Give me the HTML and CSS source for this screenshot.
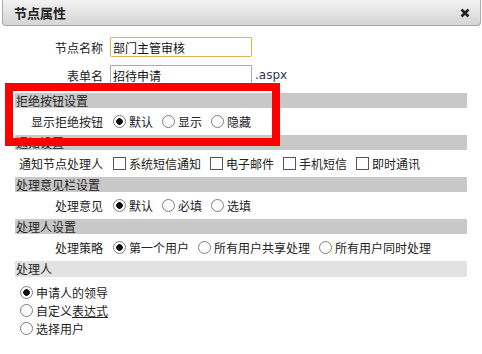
FILE: index.html
```html
<!DOCTYPE html>
<html lang="zh-CN">

<head>
  <meta charset="UTF-8">
  <meta name="viewport" content="width=device-width, initial-scale=1.0">
  <title>节点属性</title>
  <link rel="stylesheet" href="styles.css">
</head>

<body>
  <div class="dialog-title">
    <span>节点属性</span>
    <svg class="close" width="10" height="10" viewBox="0 0 10 10">
      <path d="M1.5 1.5 L8.5 8.5 M8.5 1.5 L1.5 8.5" stroke="#222" stroke-width="2.6" />
    </svg>
  </div>

  <div class="dialog-body">
    <div class="field">
      <span class="field-label">节点名称</span>
      <input type="text" class="text-input focused" value="部门主管审核">
    </div>
    <div class="field">
      <span class="field-label">表单名</span>
      <input type="text" class="text-input" value="招待申请"><span class="suffix">.aspx</span>
    </div>

    <div class="section-title">拒绝按钮设置</div>
    <div class="section-row">
      <span class="field-label">显示拒绝按钮</span>
      <label class="option"><input type="radio" name="reject" checked>默认</label>
      <label class="option"><input type="radio" name="reject">显示</label>
      <label class="option"><input type="radio" name="reject">隐藏</label>
    </div>

    <div class="section-title">通知设置</div>
    <div class="section-row">
      <span class="field-label">通知节点处理人</span>
      <label class="option"><input type="checkbox">系统短信通知</label>
      <label class="option"><input type="checkbox">电子邮件</label>
      <label class="option"><input type="checkbox">手机短信</label>
      <label class="option"><input type="checkbox">即时通讯</label>
    </div>

    <div class="section-title">处理意见栏设置</div>
    <div class="section-row">
      <span class="field-label">处理意见</span>
      <label class="option"><input type="radio" name="opinion" checked>默认</label>
      <label class="option"><input type="radio" name="opinion">必填</label>
      <label class="option"><input type="radio" name="opinion">选填</label>
    </div>

    <div class="section-title">处理人设置</div>
    <div class="section-row">
      <span class="field-label">处理策略</span>
      <label class="option"><input type="radio" name="strategy" checked>第一个用户</label>
      <label class="option"><input type="radio" name="strategy">所有用户共享处理</label>
      <label class="option"><input type="radio" name="strategy">所有用户同时处理</label>
    </div>

    <div class="section-title light">处理人</div>
    <div class="handler-list">
      <label class="option"><input type="radio" name="handler" checked>申请人的领导</label>
      <label class="option"><input type="radio" name="handler">自定义<a href="#" class="link">表达式</a></label>
      <label class="option"><input type="radio" name="handler">选择用户</label>
    </div>
  </div>

  <div class="highlight"></div>
</body>

</html>
```

FILE: styles.css
```css
body {
  margin: 0;
  padding: 0;
  font-family: "Noto Sans CJK SC", "Noto Sans", sans-serif;
  font-size: 12px;
  color: #222;
  background: #fff;
  position: relative;
}

.dialog-title {
  height: 25px;
  margin: 0 1px 0 2px;
  padding: 0 10px 0 11px;
  border: 1px solid #a8a8a8;
  border-top: none;
  border-radius: 0 0 4px 4px;
  background: linear-gradient(#f3f3f3, #d5d5d5);
  display: flex;
  align-items: center;
  justify-content: space-between;
  font-size: 13px;
  font-weight: bold;
  color: #222;
}

.dialog-body {
  width: 452px;
  padding: 11px 0 0 15px;
}

.field {
  display: flex;
  align-items: center;
  height: 20px;
  margin-bottom: 8px;
}

.field-label {
  width: 88px;
  padding-right: 5px;
  text-align: right;
  flex-shrink: 0;
}

.text-input {
  box-sizing: border-box;
  width: 142px;
  height: 20px;
  margin: 0 0 0 2px;
  padding: 0 2px;
  border: 1px solid #ababab;
  font-family: inherit;
  font-size: 12px;
  color: #111;
  outline: none;
}

.text-input.focused {
  border-color: #e0b45c;
  border-radius: 2px;
  box-shadow: 0 0 1px #f0d090;
}

.suffix {
  margin-left: 3px;
  font-family: "DejaVu Sans", sans-serif;
  font-size: 12px;
  color: #2e3a52;
}

.section-title {
  height: 15px;
  line-height: 15px;
  padding-left: 1px;
  background: #c8c8c8;
}

.section-title.light {
  height: 16px;
  line-height: 16px;
  background: #e2e2e2;
}

.section-row {
  display: flex;
  align-items: center;
  gap: 4px;
  height: 27px;
}

.section-row .field-label {
  margin-right: -4px;
}

.option {
  display: inline-flex;
  align-items: center;
}

.option input {
  appearance: none;
  box-sizing: border-box;
  width: 13px;
  height: 13px;
  margin: 0 3px 0 5px;
  background: #fff;
  flex-shrink: 0;
}

.option input[type="radio"] {
  border: 1px solid #7d7d7d;
  border-radius: 50%;
}

.option input[type="radio"]:checked {
  background: radial-gradient(circle, #111 0 3px, #fff 3.6px);
}

.option input[type="checkbox"] {
  border: 1px solid #555;
}

.handler-list {
  display: flex;
  flex-direction: column;
  padding-top: 6px;
}

.handler-list .option {
  height: 18px;
}

.link {
  color: #222;
  text-decoration: underline;
}

.highlight {
  position: absolute;
  left: 5px;
  top: 83px;
  width: 275px;
  height: 63px;
  box-sizing: border-box;
  border: 8px solid #ff0000;
}
```
